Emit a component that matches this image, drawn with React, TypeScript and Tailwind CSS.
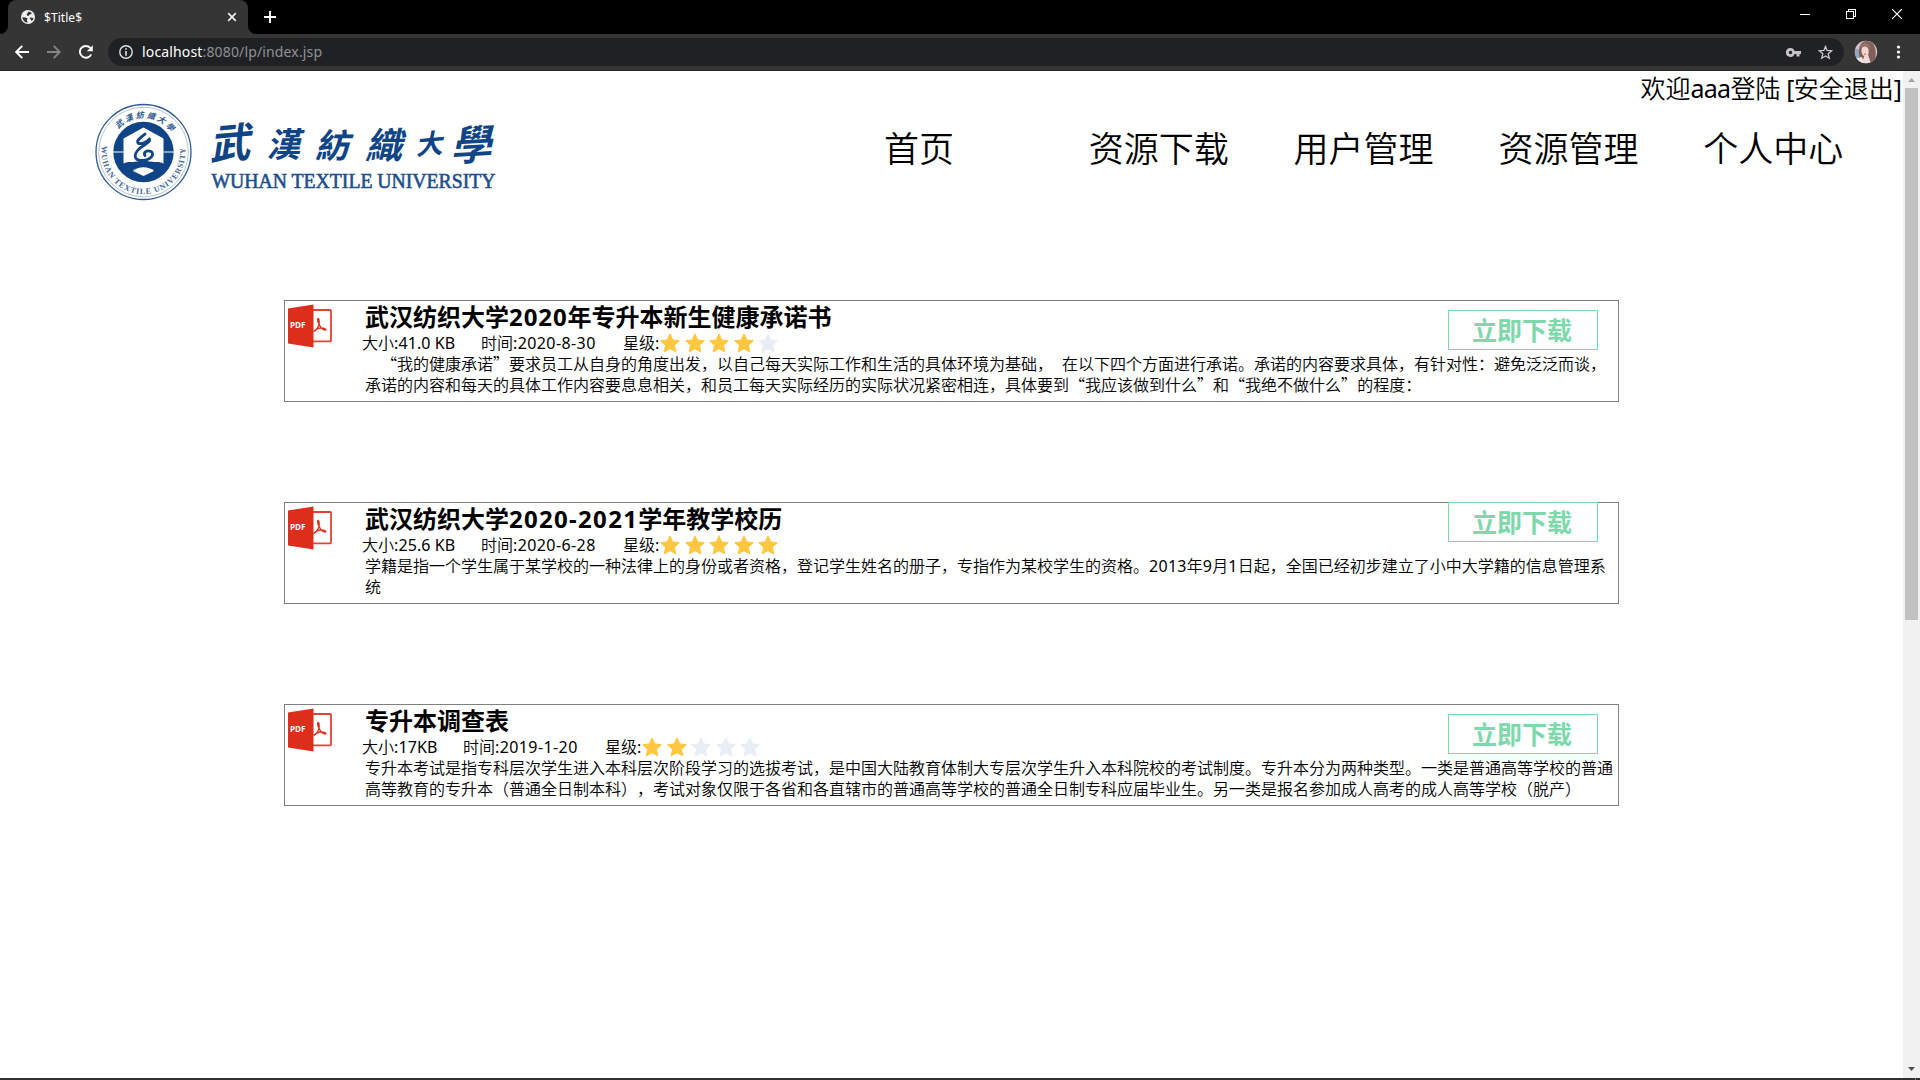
import React from "react";

const STAR_ON = "#ffc740";
const STAR_OFF = "#e9edf4";

function Latin({ children, className = "" }: { children: React.ReactNode; className?: string }) {
  return <span className={className}>{children}</span>;
}

function Quote({ children }: { children: React.ReactNode }) {
  return <span className="font-['Noto_Sans_CJK_SC',sans-serif] leading-none">{children}</span>;
}

function Browser() {
  return (
    <div className="shrink-0 bg-black font-['Noto_Sans',sans-serif]">
      <div className="flex h-[34px] items-start">
        <div className="relative ml-2 flex h-[34px] w-60 items-center rounded-t-lg bg-[#353535] pl-[13px] pr-[11px]">
          <svg className="absolute -left-2 bottom-0" width="8" height="8"><path d="M8 0A8 8 0 0 1 0 8H8Z" fill="#353535" /></svg>
          <svg className="absolute -right-2 bottom-0" width="8" height="8"><path d="M0 0A8 8 0 0 0 8 8H0Z" fill="#353535" /></svg>
          <svg width="14" height="14" viewBox="0 0 14 14">
            <circle cx="7" cy="7" r="7" fill="#f1f1f1" />
            <path d="M1.4 7.3C3 7.2 4.6 7.3 6 8.1c1.300 .8-.3 1.500-.1 2.600.2.800 .9.600.9 1.900C3.900 12.700 1.700 10.500 1.400 7.300ZM7.400 1.500C8.600 1.700 9.800 2.100 10.700 3c.1 1-.9 1.300-1.800 1.500-1.200.2-.6 1.500-1.800 1.400-1-.2-1.500-.7-1.300-1.600.2-1.200 1.500-1.200 1.600-2.800ZM9 7.600c1.200-.3 2.300.4 3.500.3-.2 1.300-.9 2.500-1.900 3.400-.500-.7-.2-1.600-1-2.100-.6-.4-1.200-.8-.6-1.600Z" fill="#353535" />
          </svg>
          <span className="ml-[9px] mt-[2px] text-[12px] leading-4 tracking-[0.05px] text-white">$Title$</span>
          <svg className="ml-auto" width="10" height="10" viewBox="0 0 10 10"><path d="M1.200 1.200 8.800 8.800M8.800 1.200 1.200 8.800" stroke="#eee" strokeWidth="1.700" /></svg>
        </div>
        <svg className="ml-4 mt-[11px]" width="12" height="12" viewBox="0 0 12 12"><path d="M6 0V12M0 6H12" stroke="#fff" strokeWidth="1.900" /></svg>
        <div className="ml-auto mr-[18px] mt-[9px] flex gap-9">
          <svg width="10" height="10" shapeRendering="crispEdges"><path d="M0 5.500H10" stroke="#fff" /></svg>
          <svg width="10" height="10" shapeRendering="crispEdges" fill="none" stroke="#fff"><path d="M.5 2.500H7.500V9.500H.5ZM2.500 2.500V.5H9.500V7.500H7.500" /></svg>
          <svg width="10" height="10"><path d="M0 0 10 10M10 0 0 10" stroke="#fff" strokeWidth="1.200" /></svg>
        </div>
      </div>
      <div className="flex h-[37px] items-center border-b border-[#242424] bg-[#353535] pl-[15px]">
        <svg width="14" height="14" viewBox="0 0 14 14" fill="none" stroke="#fff" strokeWidth="1.900"><path d="M14 7H1.500M7.300 .9 1.200 7 7.300 13.100" /></svg>
        <svg className="ml-[18px]" width="14" height="14" viewBox="0 0 14 14" fill="none" stroke="#858585" strokeWidth="1.800"><path d="M0 7H12.500M6.700 .9 12.800 7 6.700 13.100" /></svg>
        <svg className="ml-[18px]" width="14" height="14" viewBox="0 0 14 14"><path d="M12.200 9.300A5.900 5.900 0 1 1 11.300 3" fill="none" stroke="#fff" strokeWidth="1.900" /><path d="M13.800 .3V6.300H7.800Z" fill="#fff" /></svg>
        <div className="ml-[15px] flex h-7 w-[1736px] items-center rounded-full bg-[#202124] pl-[11px] pr-[11px]">
          <svg width="14" height="14" viewBox="0 0 14 14"><circle cx="7" cy="7" r="6.200" fill="none" stroke="#e4e4e4" strokeWidth="1.400" /><path d="M7 3.200V4.700M7 6V10.800" stroke="#e4e4e4" strokeWidth="1.600" /></svg>
          <span className="ml-[9px] text-[14px] leading-5 tracking-[0.15px] text-[#8f9296]"><span className="text-white">localhost</span>:8080/lp/index.jsp</span>
          <svg className="ml-auto" width="15" height="9" viewBox="0 0 15 9"><path fillRule="evenodd" fill="#c4c4c4" d="M4.500 0A4.500 4.500 0 0 1 8.600 3H15V6H13.500V8.500H10.500V6H8.600A4.500 4.500 0 1 1 4.500 0ZM4.500 2.800A1.700 1.700 0 1 0 4.500 6.200 1.700 1.700 0 1 0 4.500 2.800Z" /></svg>
          <svg className="ml-[17px]" width="15" height="15" viewBox="0 0 15 15"><path d="M7.500 1.500 9.100 5.500 13.600 5.900 10.200 8.800 11.300 13.200 7.500 10.900 3.700 13.200 4.800 8.800 1.400 5.900 5.900 5.500Z" fill="none" stroke="#c8c8c8" strokeWidth="1.300" /></svg>
        </div>
        <svg className="ml-[10px]" width="24" height="24" viewBox="0 0 24 24">
          <defs><clipPath id="face"><circle cx="12" cy="12" r="11.200" /></clipPath></defs>
          <g clipPath="url(#face)">
            <rect width="24" height="24" fill="#cfc6c8" />
            <path d="M0 9H6V20H0Z" fill="#91a9c4" />
            <path d="M6 19C3 9 6 1 13 1C21 1 23 10 21 21L16 23Z" fill="#82605a" />
            <path d="M7.500 9C8 5 13 5 14.500 9C15 13 14 17 11.500 17C9 16.500 7 13 7.500 9Z" fill="#f4d6cf" />
            <path d="M7 10C9 5 13 6 15.500 10L16 5 11 2.500 7 5Z" fill="#9a736a" />
            <path d="M10.500 16 14 14.500 17 24H7Z" fill="#efdad6" />
            <path d="M10 14.200h1.800" stroke="#c54e58" />
            <path d="M1 19 8 17 10 24H3Z" fill="#eee6e8" />
          </g>
        </svg>
        <svg className="ml-[18px]" width="5" height="14" viewBox="0 0 5 14" fill="#fff"><circle cx="2.500" cy="2" r="1.600" /><circle cx="2.500" cy="7" r="1.600" /><circle cx="2.500" cy="12" r="1.600" /></svg>
      </div>
    </div>
  );
}

const calligraphy = [
  { c: "武", x: 115, y: 58, s: 41, r: -5 },
  { c: "漢", x: 171, y: 55, s: 34, r: 0 },
  { c: "紡", x: 220, y: 56, s: 34, r: 0 },
  { c: "織", x: 270, y: 57, s: 37, r: 0 },
  { c: "大", x: 321, y: 53, s: 27, r: -5 },
  { c: "學", x: 356, y: 59, s: 41, r: -3 },
];

function Logo() {
  return (
    <svg width="410" height="100" viewBox="0 0 410 100" className="shrink-0">
      <defs>
        <path id="arcTop" d="M14.500 50A34 34 0 0 1 82.500 50" />
        <path id="arcBottom" d="M7.500 41A42 42 0 1 0 89.500 41" />
      </defs>
      <g fill="none" stroke="#2d5b95">
        <circle cx="48.500" cy="50" r="47.500" strokeWidth="1.300" />
        <circle cx="48.500" cy="50" r="44.800" strokeWidth=".6" stroke="#7f9dc2" />
      </g>
      <circle cx="48.500" cy="50" r="30.200" fill="#0f4587" />
      <path d="M48.500 25.500 68.500 36.500V61.500C60 58 56 62 48.500 62C41 62 37 58 28.500 61.500V36.500Z" fill="#fff" />
      <path d="M18 50H28.500M68.500 50H79" stroke="#fff" strokeWidth="1.200" />
      <path d="M28 65C36 57 61 57 69 65C60 62 37 62 28 65Z" fill="#0f4587" />
      <path d="M38 69C43 64 54 64 59 69L48.500 74Z" fill="#fff" />
      <path d="M50 32C47 35 41 38 43 41C46 43 52 40 54.500 37M54.500 37C56 41 47 43 43 48C38 54 40 58.500 47 58.500C56 58.500 60 52 56 49.500C52 48 48 50 50 53.500" fill="none" stroke="#0f4587" strokeWidth="2.800" strokeLinejoin="round" strokeLinecap="round" />
      <text className="font-['Noto_Sans_CJK_TC',sans-serif] text-[8px] font-bold italic" fill="#2b578f"><textPath href="#arcTop" startOffset="25" textLength="60">武漢紡織大學</textPath></text>
      <text className="font-['Liberation_Serif',serif] text-[8px] font-bold" fill="#3d689e"><textPath href="#arcBottom" startOffset="3" textLength="142">WUHAN TEXTILE UNIVERSITY</textPath></text>
      <g className="font-['Noto_Sans_CJK_TC',sans-serif] font-bold" fill="#0f4587">
        {calligraphy.map((g) => (
          <text key={g.c} transform={`translate(${g.x} ${g.y}) rotate(${g.r}) skewX(-14)`} fontSize={g.s}>{g.c}</text>
        ))}
      </g>
      <text x="116.500" y="85.500" textLength="284" lengthAdjust="spacingAndGlyphs" className="font-['Liberation_Serif',serif] text-[20px]" fill="#1d4f8f" stroke="#1d4f8f" strokeWidth=".6">WUHAN TEXTILE UNIVERSITY</text>
    </svg>
  );
}

function PdfIcon() {
  return (
    <svg width="44" height="44" viewBox="0 0 44 44" className="mt-[3px] shrink-0">
      <path d="M24 6H42.300Q43 6 43 6.700V36.600Q43 37.300 42.300 37.300H24" fill="#fff" stroke="#e04436" strokeWidth="1.800" />
      <path d="M26 27.500C30 25 32 20 31 15.500C30 12.500 28.500 16 31 20C32.500 24 35 26 37.500 26C39 25.500 36 23.500 32 24C29 24.500 26 27 25.500 27.500" fill="none" stroke="#dd2e1c" strokeWidth="1.300" />
      <path d="M0 4.500 25.500 .5V43.500L0 39.500Z" fill="#dd2e1c" />
      <text x="2" y="23.500" textLength="15.500" className="font-['Open_Sans',sans-serif] text-[8px] font-bold" fill="#fff">PDF</text>
    </svg>
  );
}

function Star({ on }: { on: boolean }) {
  return (
    <svg width="20" height="20" viewBox="0 0 20 20">
      <path d="M10 .8 12.800 6.900 19.300 7.700 14.500 12.200 15.800 18.900 10 15.700 4.200 18.900 5.500 12.200 .7 7.700 7.200 6.900Z" fill={on ? STAR_ON : STAR_OFF} stroke={on ? STAR_ON : STAR_OFF} strokeWidth="1" strokeLinejoin="round" />
    </svg>
  );
}

type Item = {
  title: React.ReactNode;
  size: string;
  sizeWidth: string;
  date: string;
  stars: number;
  lines: React.ReactNode[];
  raised?: boolean;
};

const items: Item[] = [
  {
    title: <>武汉纺织大学<Latin className="tracking-[0.9px]">2020</Latin>年专升本新生健康承诺书</>,
    size: "41.0 KB", sizeWidth: "w-[120px]", date: "2020-8-30", stars: 4,
    lines: [
      <>　<Quote>“</Quote>我的健康承诺<Quote>”</Quote>要求员工从自身的角度出发，以自己每天实际工作和生活的具体环境为基础，<span className="inline-block w-[9px]" />在以下四个方面进行承诺。承诺的内容要求具体，有针对性：避免泛泛而谈，</>,
      <>承诺的内容和每天的具体工作内容要息息相关，和员工每天实际经历的实际状况紧密相连，具体要到<Quote>“</Quote>我应该做到什么<Quote>”</Quote>和<Quote>“</Quote>我绝不做什么<Quote>”</Quote>的程度：</>,
    ],
  },
  {
    title: <>武汉纺织大学<Latin className="tracking-[1.300px]">2020-2021</Latin>学年教学校历</>,
    size: "25.6 KB", sizeWidth: "w-[120px]", date: "2020-6-28", stars: 5, raised: true,
    lines: [
      <>学籍是指一个学生属于某学校的一种法律上的身份或者资格，登记学生姓名的册子，专指作为某校学生的资格。<Latin className="font-normal tracking-[0.3px]">2013</Latin>年<Latin className="font-normal tracking-[0.3px]">9</Latin>月<Latin className="font-normal tracking-[0.3px]">1</Latin>日起，全国已经初步建立了小中大学籍的信息管理系</>,
      <>统</>,
    ],
  },
  {
    title: <>专升本调查表</>,
    size: "17KB", sizeWidth: "w-[102px]", date: "2019-1-20", stars: 2,
    lines: [
      <>专升本考试是指专科层次学生进入本科层次阶段学习的选拔考试，是中国大陆教育体制大专层次学生升入本科院校的考试制度。专升本分为两种类型。一类是普通高等学校的普通</>,
      <>高等教育的专升本（普通全日制本科），考试对象仅限于各省和各直辖市的普通高等学校的普通全日制专科应届毕业生。另一类是报名参加成人高考的成人高等学校（脱产）</>,
    ],
  },
];

function Card({ item }: { item: Item }) {
  return (
    <article className="flex h-[102px] w-[1335px] border border-[#808080] pl-[3px]">
      <PdfIcon />
      <div className="ml-[29px] flex w-[1257px] flex-col">
        <div className="flex h-[53px] justify-between">
          <div className="flex flex-col">
            <h2 className="ml-1 h-8 whitespace-nowrap text-[24px] font-bold leading-[31px]">{item.title}</h2>
            <div className="flex h-5 items-center whitespace-nowrap text-[16px] font-[350] leading-5">
              <div className={item.sizeWidth + " pl-px"}>大小<Latin className="font-normal tracking-[0.1px]">:{item.size}</Latin></div>
              <div className="w-[142px]">时间<Latin className="font-normal tracking-[0.4px]">:{item.date}</Latin></div>
              <div className="w-[37px]">星级<Latin className="font-normal">:</Latin></div>
              <div className="flex gap-[4.6px]">
                {[0, 1, 2, 3, 4].map((n) => <Star key={n} on={n < item.stars} />)}
              </div>
            </div>
          </div>
          <a className={(item.raised ? "-mt-px" : "mt-[9px]") + " mr-[20px] flex h-10 w-[150px] items-center justify-center border border-[#7dd9ab] pr-[2px] pt-px text-[25px] font-bold leading-none text-[#7dd9ab]"}>立即下载</a>
        </div>
        <div className="ml-1 whitespace-nowrap text-[16px] font-[350] leading-[21px] [text-spacing-trim:space-all]">
          {item.lines.map((l, i) => <p key={i} className="h-[21px]">{l}</p>)}
        </div>
      </div>
    </article>
  );
}

export default function App() {
  return (
    <div className="flex h-[1080px] w-[1920px] flex-col overflow-hidden bg-white text-black">
      <Browser />
      <div className="flex min-h-0 grow">
        <main className="flex w-[1903px] flex-col font-['Noto_Sans','Noto_Sans_CJK_SC',sans-serif]">
          <div className="flex h-[31px] items-center justify-end whitespace-nowrap pr-px pt-[2px] text-[25px] font-[350] leading-[34px]">
            欢迎<Latin className="font-normal tracking-[-0.7px]">aaa</Latin>登陆<Latin className="font-normal tracking-[-0.7px]">&nbsp;[</Latin>安全退出<Latin className="font-normal">]</Latin>
          </div>
          <header className="flex h-[100px] pl-[95px]">
            <Logo />
            <nav className="ml-[379px] flex pt-[24px] text-[35px] font-[350] leading-[46px]">
              {["首页", "资源下载", "用户管理", "资源管理", "个人中心"].map((t) => (
                <a key={t} className="w-[204.800px] shrink-0 whitespace-nowrap">{t}</a>
              ))}
            </nav>
          </header>
          <section className="ml-[284px] mt-[98px] flex flex-col gap-[100px]">
            {items.map((it, i) => <Card key={i} item={it} />)}
          </section>
        </main>
        <aside className="flex w-[17px] flex-col items-center bg-[#f1f1f1]">
          <svg width="17" height="17"><path d="M5 11H12L8.500 7Z" fill="#a3a3a3" /></svg>
          <div className="h-[532px] w-[13px] bg-[#c1c1c1]" />
          <svg className="mt-auto" width="17" height="17"><path d="M5 6H12L8.500 10Z" fill="#505050" /></svg>
        </aside>
      </div>
      <footer className="flex h-[2px] shrink-0 justify-end bg-[#303134] pr-1"><span className="w-px bg-[#777]" /></footer>
    </div>
  );
}
